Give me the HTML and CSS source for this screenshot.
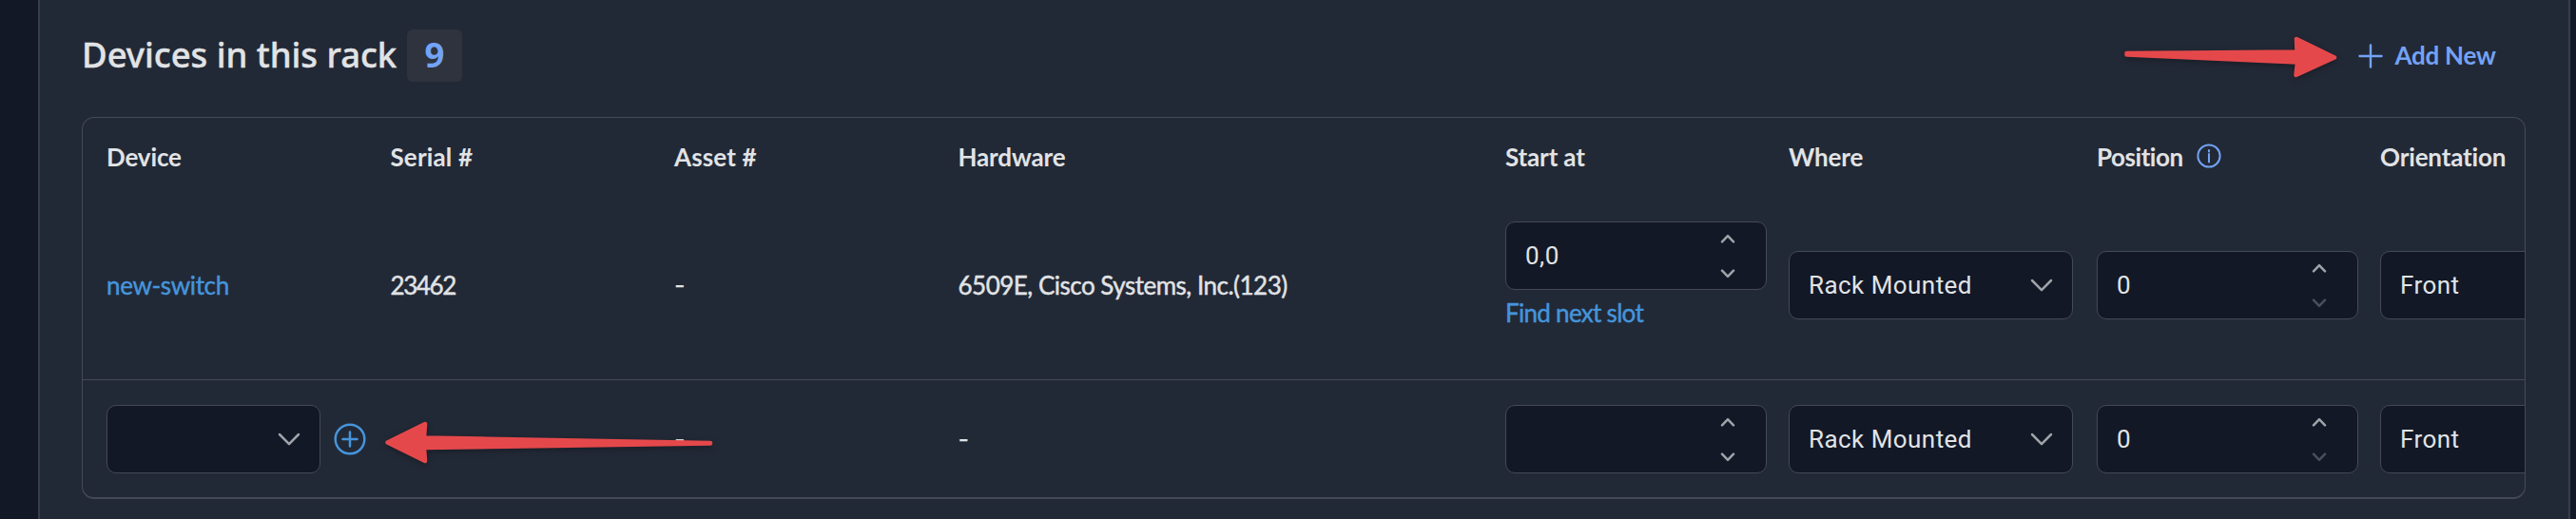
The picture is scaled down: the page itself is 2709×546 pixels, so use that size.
FILE: index.html
```html
<!DOCTYPE html>
<html lang="en">
<head>
<meta charset="utf-8">
<title>Devices in this rack</title>
<link rel="stylesheet" href="styles.css">
</head>
<body>
<svg class="defs" width="0" height="0" aria-hidden="true">
  <symbol id="chevron" viewBox="0 0 24 14"><path d="M2 2l10 10.2L22 2"/></symbol>
  <symbol id="up" viewBox="0 0 16 10"><path d="M2 8.3l6-6.2 6 6.2"/></symbol>
  <symbol id="down" viewBox="0 0 16 10"><path d="M2 1.7l6 6.2 6-6.2"/></symbol>
</svg>
<main class="panel">
  <header class="panel-head">
    <h2 class="title">Devices in this rack</h2>
    <span class="count">9</span>
    <a class="add-new">
      <svg class="plus" viewBox="0 0 26 26"><path d="M13 1.5v23M1.5 13h23"/></svg>
      <span>Add New</span>
    </a>
  </header>
  <section class="table">
    <div class="row row-head">
      <div class="cell">Device</div>
      <div class="cell hash">Serial #</div>
      <div class="cell hash">Asset #</div>
      <div class="cell">Hardware</div>
      <div class="cell">Start at</div>
      <div class="cell">Where</div>
      <div class="cell position-head"><span>Position</span>
        <svg class="info" viewBox="0 0 26 26"><circle cx="13" cy="13" r="11.6"/><path d="M13 11v8.5"/><path class="dot" d="M13 7v1.6"/></svg>
      </div>
      <div class="cell">Orientation</div>
    </div>
    <div class="row row-device">
      <div class="cell"><a class="link name">new-switch</a></div>
      <div class="cell serial">23462</div>
      <div class="cell empty">-</div>
      <div class="cell hardware">6509E, Cisco Systems, Inc.(123)</div>
      <div class="cell start">
        <div class="field number"><span class="slot">0,0</span><span class="spin"><svg><use href="#up"/></svg><svg><use href="#down"/></svg></span></div>
        <a class="link find">Find next slot</a>
      </div>
      <div class="cell"><div class="field select where"><span>Rack Mounted</span><svg class="chev"><use href="#chevron"/></svg></div></div>
      <div class="cell"><div class="field number"><span>0</span><span class="spin"><svg><use href="#up"/></svg><svg class="off"><use href="#down"/></svg></span></div></div>
      <div class="cell"><div class="field select where"><span>Front</span><svg class="chev"><use href="#chevron"/></svg></div></div>
    </div>
    <div class="row row-new">
      <div class="cell device-picker">
        <div class="field select device"><span></span><svg class="chev"><use href="#chevron"/></svg></div>
        <svg class="circle-plus" viewBox="0 0 34 34"><circle cx="17" cy="17" r="15.3"/><path d="M17 9.5v15M9.5 17h15"/></svg>
      </div>
      <div class="cell"></div>
      <div class="cell empty">-</div>
      <div class="cell empty">-</div>
      <div class="cell"><div class="field number"><span></span><span class="spin"><svg><use href="#up"/></svg><svg><use href="#down"/></svg></span></div></div>
      <div class="cell"><div class="field select where"><span>Rack Mounted</span><svg class="chev"><use href="#chevron"/></svg></div></div>
      <div class="cell"><div class="field number"><span>0</span><span class="spin"><svg><use href="#up"/></svg><svg class="off"><use href="#down"/></svg></span></div></div>
      <div class="cell"><div class="field select where"><span>Front</span><svg class="chev"><use href="#chevron"/></svg></div></div>
    </div>
  </section>
</main>
<svg class="annotations" viewBox="0 0 2709 546">
  <path d="M2236.5 56L2415.5 54.5L2415 41L2455 60.5L2414.500 79L2416 65.500L2236.500 57.500Z"/>
  <path d="M747 466L446 460.5L447 446L407.500 465.500L447 485L446 471L747 466.500Z"/>
</svg>
</body>
</html>
```
FILE: styles.css
```css
* { box-sizing: border-box; }

body {
  margin: 0;
  height: 546px;
  overflow: hidden;
  padding: 0 6px 0 40px;
  background: #121826;
  color: #e1e3e5;
  font: 400 26px/1.2 Lato, "Open Sans", sans-serif;
}

svg {
  display: block;
  fill: none;
  stroke-linecap: round;
  stroke-linejoin: round;
}

.defs { position: absolute; }

.panel {
  height: 546px;
  padding: 0 45.5px 0 44px;
  border: solid #383d49;
  border-width: 0 2px;
  background: #222936;
}

.panel-head {
  display: flex;
  align-items: center;
  height: 123px;
  padding: 0 31px 6px 0;
}

.title {
  margin: 0 0 3px;
  width: 342px;
  white-space: nowrap;
  font: 500 36.5px/50px "Noto Sans", sans-serif;
  letter-spacing: -0.05px;
  -webkit-text-stroke: 0.4px currentColor;
}

.count {
  width: 58px;
  height: 55px;
  border-radius: 6px;
  background: #2f333d;
  color: #73a3f6;
  text-align: center;
  font: 700 36.5px/52px "Noto Sans", sans-serif;
}

.add-new {
  display: flex;
  align-items: center;
  gap: 12px;
  margin: 1px 0 0 auto;
  color: #73a3f6;
  font-weight: 700;
  letter-spacing: -0.25px;
}

.plus {
  width: 26px;
  height: 26px;
  stroke: currentColor;
  stroke-width: 2.4;
}

.table {
  height: 402px;
  overflow: hidden;
  border: 1px solid #444955;
  border-bottom-width: 2px;
  border-radius: 13px;
}

.row {
  display: grid;
  grid-template-columns: 298.5px 298.5px 298.5px 575.5px 298px 324px 298px 298px;
  align-items: center;
  padding-left: 25px;
}

.row-head {
  height: 77px;
  padding-top: 7px;
  font-weight: 700;
  letter-spacing: -0.15px;
}

.hash { letter-spacing: 0.15px; }

.row-device {
  height: 199px;
  border-bottom: 1px solid #444955;
}

.row-new {
  height: 123px;
  padding-top: 1px;
}

.position-head,
.device-picker {
  display: flex;
  align-items: center;
}

.position-head { gap: 14px; letter-spacing: -0.45px; }

.info {
  width: 26px;
  height: 26px;
  margin-bottom: 4px;
  stroke: #73a3f6;
  stroke-width: 2;
}

.link { color: #4595dc; }

.name,
.serial,
.hardware {
  padding-top: 2px;
  -webkit-text-stroke: 0.45px currentColor;
}

.name { display: block; letter-spacing: -0.35px; }
.serial { letter-spacing: -1.4px; }
.hardware { letter-spacing: -0.5px; }

.empty {
  font: 500 25px/1.2 Inter, sans-serif;
}

.start { padding-bottom: 14px; }

.find {
  display: block;
  line-height: 48px;
  letter-spacing: -0.7px;
  -webkit-text-stroke: 0.45px currentColor;
}

.field {
  display: flex;
  align-items: center;
  justify-content: space-between;
  height: 72px;
  padding: 0 20px;
  border: 1px solid #444955;
  border-radius: 10px;
  background: #121826;
  font-family: Roboto, sans-serif;
  letter-spacing: 0.45px;
}

.field > span:first-child { padding-top: 1px; }
.field > .slot:first-child { padding-top: 2px; }

.number { width: 275px; padding-right: 32px; }
.where { width: 299px; }
.device { width: 225px; }

.spin {
  display: flex;
  flex-direction: column;
  gap: 27px;
}

.spin svg {
  width: 16px;
  height: 10px;
  stroke: #a0a3a9;
  stroke-width: 2.5;
}

.spin .off { stroke: #4b4f59; }

.chev {
  width: 24px;
  height: 14px;
  stroke: #a0a3a9;
  stroke-width: 2.5;
}

.circle-plus {
  width: 34px;
  height: 34px;
  margin-left: 14px;
  stroke: #4595dc;
  stroke-width: 2.5;
}

/* Callout arrows drawn over the panel */
.annotations {
  position: absolute;
  inset: 0;
  width: 2709px;
  height: 546px;
  fill: #e5484b;
  stroke: #e5484b;
  stroke-width: 4.5;
  filter: drop-shadow(0 2px 3px rgba(0, 0, 0, 0.3));
  pointer-events: none;
}
```
